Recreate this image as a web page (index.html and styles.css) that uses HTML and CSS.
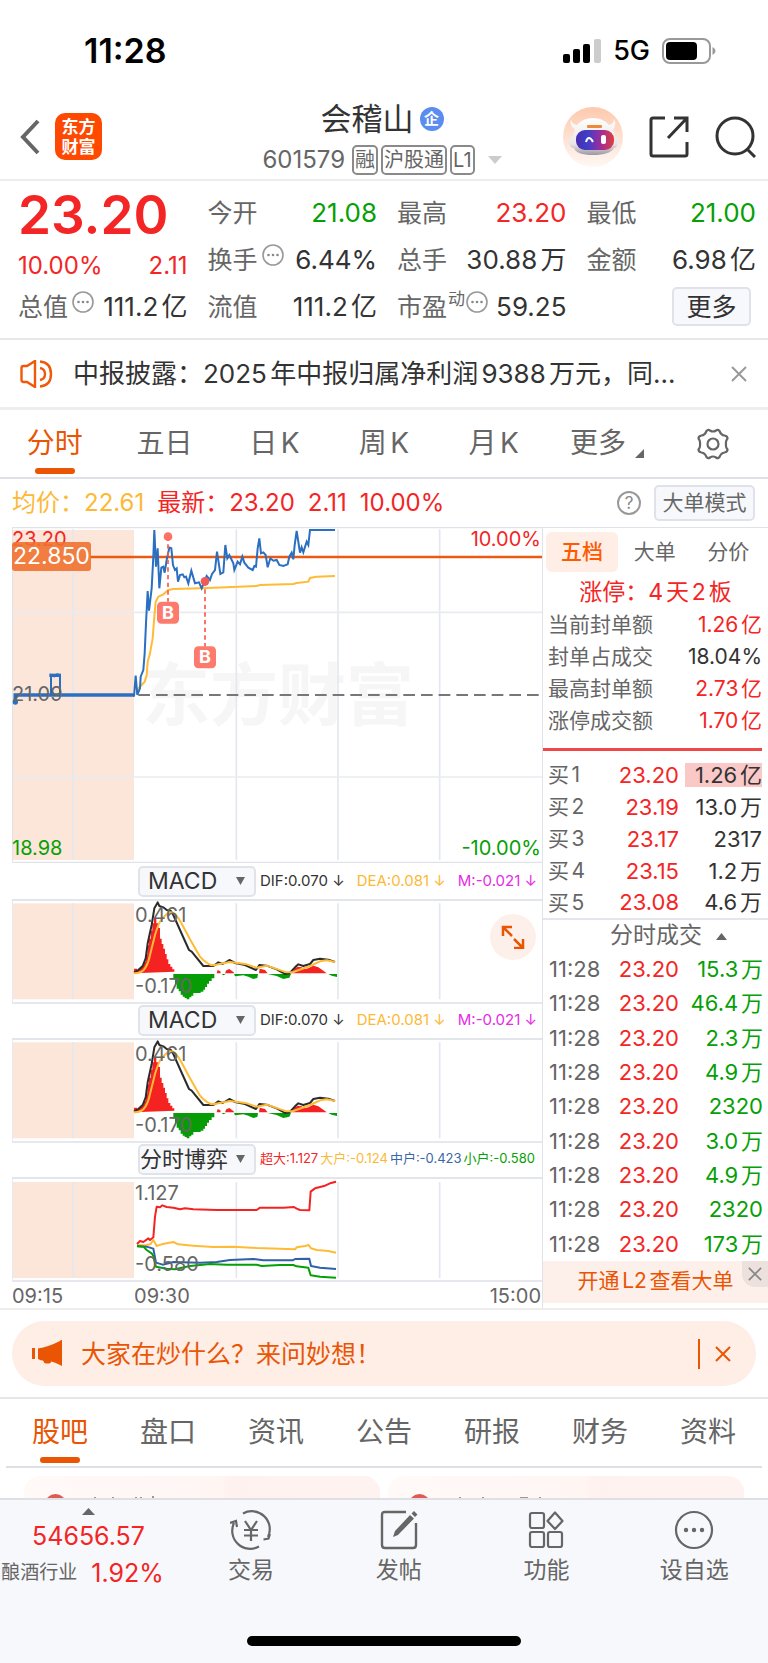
FILE: index.html
```html
<!DOCTYPE html>
<html lang="zh-CN">
<head>
<meta charset="utf-8">
<meta name="viewport" content="width=device-width, initial-scale=1">
<title>会稽山 601579</title>
<link rel="stylesheet" href="styles.css">
</head>
<body>
<svg class="defs" aria-hidden="true">
  <symbol id="dots" viewBox="0 0 22 22"><circle cx="11" cy="11" r="10" fill="none" stroke="#999" stroke-width="1.6"/><g fill="#888"><circle cx="6.5" cy="11" r="1.3"/><circle cx="11" cy="11" r="1.3"/><circle cx="15.500" cy="11" r="1.3"/></g></symbol>
  <symbol id="cross" viewBox="0 0 16 16"><path d="M1 1l14 14M15 1L1 15" fill="none" stroke="currentColor" stroke-width="2"/></symbol>
  <symbol id="macd" viewBox="36 123 1590 303">
    <rect x="38" y="130" width="364" height="288" fill="#fce6da"/>
    <path d="M219 130v288M709 130v288M1014 130v288M1319 130v288" stroke="#e4e7ed" stroke-width="5"/>
    <path d="M37 123v303" stroke="#e4e7ed" stroke-width="3"/>
    <g fill="#f52222"><path d="M402 340v-14h9v3h8v-6h6v-5h6v-12h6v-22h5v-28h5v-20h5v-24h5v-22h5v-16h7v16h6v14h5v32h5v16h5v14h5v16h5v16h5v14h6v8h6v8h6v7zM650 340l3-10 8 4 1 6zM675 340l4-9 9-4 12 9 3 4zM777 340l2-14 16 4 8 10zM873 340l12-15 8-5 12 2 10 6 10-3 15-8 15 5 15 10 10 8z"/></g>
    <g fill="#069c06"><path d="M520 342v16h5v14h5v14h6v8h6v10h6v6h6v4h6v4h8v-6h6v-5h6v-8h22v-4h8v-6h5v-8h6v-10h6v-8h8v-8h8v-13zM664 342l7 4 6-4zM702 342l3 7 25-3 15 4 15 7 12-3 2-12zM803 342l27 6 20 9 18-4 5-11zM985 342l10 5 16 4v-9z"/></g>
    <g fill="none" stroke-width="6" stroke-linejoin="round">
      <path stroke="#2b2b2b" d="M402 338l13-8 13-12 9-23 6-45 12-55 8-50 7-12 3-6 5 11 12 4 10 8 12 2 8 13 20 45 27 60 8 5 35 43h30l15-11 13 5 20-12 17 9 30 6 33 15 10-15 22 2 30 11 25 14 13-2 17-18 10-9 15 5 20-6 10-12 20-4 25 3 20 7"/>
      <path stroke="#ffbb36" d="M402 340q25 0 33-15 10-15 15-40l15-60q8-26 15-40 7-10 15-18 9-9 17-10 7 0 13 5 10 10 25 38l20 38 30 52q10 12 20 18 10 8 20 8l50-10 50 7 30 10 30-6 60 20 20-1 50-18 30-14 20-3 25 5"/>
    </g>
  </symbol>
</svg>
<div class="page">
  <div class="status">
    <span class="clock">11:28</span>
    <span class="signals">
      <svg width="38" height="24" viewBox="0 0 38 24" aria-hidden="true"><rect y="15" width="7" height="9" rx="2"/><rect x="10" y="10" width="7" height="14" rx="2"/><rect x="20" y="5" width="7" height="19" rx="2"/><rect x="31" width="7" height="24" rx="2" fill="#ccc"/></svg>
      <span class="net">5G</span>
      <svg width="54" height="26" viewBox="0 0 54 26" aria-hidden="true"><rect x="1" y="1" width="47" height="24" rx="7" fill="#fff" stroke="#999" stroke-width="2"/><rect x="4" y="4" width="31" height="18" rx="4"/><path d="M50.500 9q3 1.500 3 4t-3 4z" fill="#999"/></svg>
    </span>
  </div>

  <header class="top">
    <div class="top-left">
      <button class="plain" aria-label="返回"><svg width="20" height="36" viewBox="0 0 20 36"><path d="M18 2L3 18l15 16" fill="none" stroke="#666" stroke-width="4"/></svg></button>
      <a class="logo" href="#">东方<br>财富</a>
    </div>
    <div class="top-mid">
      <h1>会稽山<span class="corp">企</span></h1>
      <div class="code"><span class="num">601579</span><span class="tag">融</span><span class="tag">沪股通</span><span class="tag">L1</span><svg class="drop" width="14" height="8" viewBox="0 0 14 8"><path d="M0 0h14L7 8z" fill="#ccc"/></svg></div>
    </div>
    <div class="top-right">
      <button class="plain" aria-label="妙想"><svg width="60" height="60" viewBox="0 0 60 60">
        <defs><linearGradient id="halo" x1="0" y1="0" x2="0" y2="1"><stop offset="0" stop-color="#fdc9ad"/><stop offset="1" stop-color="#fff8f4"/></linearGradient>
        <linearGradient id="visor" x1="0" y1="0" x2="1" y2="0"><stop offset="0" stop-color="#4a2bb0"/><stop offset=".3" stop-color="#3d3fc8"/><stop offset=".65" stop-color="#a02c9a"/><stop offset="1" stop-color="#e0403c"/></linearGradient>
        <linearGradient id="shell" x1="0" y1="0" x2="0" y2="1"><stop offset="0" stop-color="#fff"/><stop offset=".7" stop-color="#e9e5e8"/><stop offset="1" stop-color="#9d98a0"/></linearGradient></defs>
        <circle cx="30" cy="30" r="30" fill="url(#halo)"/>
        <path d="M8 12q0 5 6 6 6-7 16-7t16 7q5-1 5-6 3 5-1 11 2 3 2 6 4 2 3 7t-4 5q-4 7-21 7T11 41q-4 0-5-5t4-7q0-3 2-6-6-5-4-11z" fill="url(#shell)"/>
        <rect x="13" y="23" width="38" height="20" rx="9" fill="url(#visor)"/>
        <path d="M23 35q1-4 3-4t4 4" fill="none" stroke="#fff" stroke-width="2"/><rect x="38" y="28" width="5" height="9" rx="2" fill="#fff"/>
        <rect x="24" y="18" width="15" height="3" rx="1" fill="#ee8a3c"/></svg></button>
      <button class="plain" aria-label="分享"><svg width="40" height="42" viewBox="0 0 40 42"><path d="M16 2H4Q2 2 2 4v34q0 2 2 2h32q2 0 2-2V26M25 2h13v14M38 2L19 22" fill="none" stroke="#333" stroke-width="3"/></svg></button>
      <button class="plain" aria-label="搜索"><svg width="42" height="42" viewBox="0 0 42 42"><circle cx="20" cy="20" r="18" fill="none" stroke="#333" stroke-width="3"/><path d="M32 33l8 8" stroke="#333" stroke-width="3"/></svg></button>
    </div>
  </header>

  <section class="quote">
    <div class="qcol">
      <div class="price">23.20</div>
      <div class="change"><span>10.00%</span><span>2.11</span></div>
      <div class="qrow"><span class="lab">总值<svg class="dots"><use href="#dots"/></svg></span><span>111.2亿</span></div>
    </div>
    <div class="qcol">
      <div class="qrow"><span class="lab">今开</span><span class="down">21.08</span></div>
      <div class="qrow"><span class="lab">换手<svg class="dots"><use href="#dots"/></svg></span><span>6.44%</span></div>
      <div class="qrow"><span class="lab">流值</span><span>111.2亿</span></div>
    </div>
    <div class="qcol">
      <div class="qrow"><span class="lab">最高</span><span class="up">23.20</span></div>
      <div class="qrow"><span class="lab">总手</span><span>30.88万</span></div>
      <div class="qrow"><span class="lab tight">市盈<sup>动</sup><svg class="dots"><use href="#dots"/></svg></span><span>59.25</span></div>
    </div>
    <div class="qcol">
      <div class="qrow"><span class="lab">最低</span><span class="down">21.00</span></div>
      <div class="qrow"><span class="lab">金额</span><span>6.98亿</span></div>
      <div class="qrow end"><button class="more">更多</button></div>
    </div>
  </section>

  <section class="news">
    <svg width="33" height="28" viewBox="0 0 33 28" aria-hidden="true"><path d="M1.500 8q0-2 2-2H7l8-5v26l-8-5H3.500q-2 0-2-2zM20 1.500q11 1 11 12.500T20 26.500M20 8q5 1 5 6t-5 6" fill="none" stroke="#ee5a0a" stroke-width="2.400"/></svg>
    <a href="#">中报披露：2025年中报归属净利润9388万元，同…</a>
    <button class="plain gray" aria-label="关闭"><svg width="16" height="16"><use href="#cross"/></svg></button>
  </section>

  <nav class="tabs">
    <button class="on">分时</button><button>五日</button><button>日K</button><button>周K</button><button>月K</button>
    <button>更多<svg class="corner" width="9" height="9" viewBox="0 0 9 9"><path d="M9 0v9H0z" fill="#666"/></svg></button>
    <button aria-label="设置"><svg width="34" height="32" viewBox="0 0 34 32"><path d="M10.500 3Q12 1 14 2.500q3 2 6 0Q22 1 23.500 3q1.500 4 5 4.500 3 .5 3 3-2 2.500-1.500 5.500-.5 3 1.500 5.500 0 2.500-3 3-3.500.5-5 4.500-1.500 2-3.500.5-3-2-6 0-2 1.500-3.500-.5-1.500-4-5-4.500-3-.5-3-3Q4.500 19 4 16q.5-3-1.500-5.500 0-2.500 3-3 3.500-.5 5-4.500z" fill="none" stroke="#666" stroke-width="2.200"/><circle cx="17" cy="16" r="5.500" fill="none" stroke="#666" stroke-width="2.200"/></svg></button>
  </nav>

  <div class="info">
    <span class="avg">均价：22.61</span><span class="up">最新：23.20</span><span class="up">2.11</span><span class="up">10.00%</span>
    <button class="help" aria-label="帮助">?</button>
    <button class="mode">大单模式</button>
  </div>

  <div class="board">
    <div class="left">
      <figure class="plot">
        <svg viewBox="36 21 1590 1008" role="img" aria-label="分时走势">
          <rect x="38" y="30" width="364" height="990" fill="#fce6da"/>
          <g fill="#f6f6f7" class="mark"><text x="426" y="600">东方财富</text></g>
          <path d="M219 28v992M709 28v992M1014 28v992M1319 28v992" stroke="#e4e7ed" stroke-width="5"/>
          <path d="M37 277h1589M37 771h1589" stroke="#e9ebf1" stroke-width="5"/>
          <path d="M37 23h1589M37 1027h1589M37 23v1004" stroke="#dfe2e9" stroke-width="4" fill="none"/>
          <path d="M415 525h1211" stroke="#777" stroke-width="6" stroke-dasharray="35 18"/>
          <path d="M270 111h1356" stroke="#ea5a10" stroke-width="7"/>
          <path d="M410 520l5-15 10-10 9-10 6-20 3-40 7-25 8-45 5-65 4-45 8-15 15-7 15-13 15-3 80-2 80-3 90-4 10-3 100-3 10-3 35-4 5-11 20-4 55-2" fill="none" stroke="#ffbb36" stroke-width="6"/>
          <path d="M46 550V525H402" fill="none" stroke="#2a6fc0" stroke-width="11"/><circle cx="46" cy="546" r="8" fill="#2a6fc0"/>
          <path d="M153 525v-60l10 4 8-6 9 2v60" fill="none" stroke="#2a6fc0" stroke-width="6"/><path d="M148 466h35" stroke="#2a6fc0" stroke-width="10"/>
          <path d="M402 530L407 467 412 525 420 505 422 470 430 450 434 400 438 310 443 213 447 272 455 205 460 110 463 30 468 140 473 85 478 205 484 143 490 140 494 158 500 120 508 83 514 85 519 135 525 150 530 145 534 185 540 165 548 163 553 172 558 170 565 190 574 152 585 190 597 187 605 205 613 185 620 168 630 180 636 162 645 150 651 95 661 162 670 157 676 75 682 115 688 105 700 130 703 150 713 125 720 133 727 110 733 128 745 143 758 150 763 138 768 140 773 85 778 55 783 100 790 97 797 105 803 142 811 115 820 122 830 120 838 135 850 138 863 133 868 110 875 98 880 118 884 75 890 33 900 98 905 82 910 97 920 65 925 75 930 30 1005 30" fill="none" stroke="#2a6fc0" stroke-width="6"/>
          <path d="M504 50v195M615 185v195" stroke="#fa5a4a" stroke-width="5" stroke-dasharray="13 10"/>
          <circle cx="504" cy="50" r="13" fill="#fd7266"/><circle cx="615" cy="184" r="13" fill="#f05a58"/>
          <g fill="#fd7b6c"><rect x="471" y="245" width="66" height="66" rx="13"/><rect x="582" y="379" width="66" height="66" rx="13"/></g>
        </svg>
        <span class="buy b1">B</span><span class="buy b2">B</span>
        <span class="tl up">23.20</span><span class="tag-price">22.850</span><span class="ml">21.09</span><span class="bl down">18.98</span><span class="tr up">10.00%</span><span class="br down">-10.00%</span>
      </figure>

      <div class="ind-head"><select aria-label="指标一"><option>MACD</option></select><span class="dif">DIF:0.070 ↓</span><span class="avg">DEA:0.081 ↓</span><span class="mag">M:-0.021 ↓</span></div>
      <figure class="ind"><svg viewBox="0 0 530 101"><use href="#macd"/></svg><span class="hi">0.461</span><span class="lo">-0.170</span>
        <button class="expand" aria-label="全屏"><svg width="24" height="24" viewBox="0 0 24 24"><path d="M11 2H2v9M2 2l9 9M22 14v9h-9M22 23l-9-9" fill="none" stroke="#ea5504" stroke-width="2.500"/></svg></button></figure>

      <div class="ind-head"><select aria-label="指标二"><option>MACD</option></select><span class="dif">DIF:0.070 ↓</span><span class="avg">DEA:0.081 ↓</span><span class="mag">M:-0.021 ↓</span></div>
      <figure class="ind"><svg viewBox="0 0 530 101"><use href="#macd"/></svg><span class="hi">0.461</span><span class="lo">-0.170</span></figure>

      <div class="ind-head game"><select aria-label="指标三"><option>分时博弈</option></select><span class="up">超大:1.127</span><span class="avg">大户:-0.124</span><span class="navy">中户:-0.423</span><span class="down">小户:-0.580</span></div>
      <figure class="ind"><svg viewBox="36 117 1590 303">
        <rect x="38" y="126" width="364" height="288" fill="#fce6da"/>
        <path d="M219 126v288M709 126v288M1014 126v288M1319 126v288" stroke="#e4e7ed" stroke-width="5"/><path d="M37 117v303" stroke="#e4e7ed" stroke-width="3"/>
        <g fill="none" stroke-width="6" stroke-linejoin="round">
          <path stroke="#ffbb36" d="M411 316L440 315 452 312 460 300 470 318 485 313 500 310 520 306 535 313 580 317 640 321 700 320 770 324 885 328 890 322 915 318 926 315 933 325 950 330 985 333 1008 338"/>
          <path stroke="#3060a8" d="M411 319L440 320 460 326 468 368 488 374 520 366 600 368 650 366 690 360 760 357 790 361 878 361 885 357 928 356 933 378 960 383 1008 387"/>
          <path stroke="#06a006" d="M411 318L430 320 440 330 455 340 460 348 468 380 500 386 525 388 570 378 630 372 680 374 770 374 785 378 840 375 880 375 890 379 925 383 932 406 960 410 1008 413"/>
          <path stroke="#f52222" d="M411 312L420 303 430 306 445 295 450 300 460 292 465 230 470 200 480 202 487 196 500 201 520 203 540 208 555 205 580 208 650 210 770 210 780 203 850 203 882 201 890 206 900 210 928 211 932 155 945 145 975 137 990 130 1008 125"/>
        </g></svg><span class="hi">1.127</span><span class="lo">-0.580</span></figure>
      <div class="axis"><span>09:15</span><span class="open">09:30</span><span class="close">15:00</span></div>
    </div>

    <aside class="right">
      <div class="rtabs"><button class="on">五档</button><button>大单</button><button>分价</button></div>
      <div class="limit">涨停：4天2板</div>
      <dl class="stats">
        <div><dt>当前封单额</dt><dd class="up">1.26亿</dd></div>
        <div><dt>封单占成交</dt><dd>18.04%</dd></div>
        <div><dt>最高封单额</dt><dd class="up">2.73亿</dd></div>
        <div><dt>涨停成交额</dt><dd class="up">1.70亿</dd></div>
      </dl>
      <table class="bids">
        <tr><th scope="row">买1</th><td class="up">23.20</td><td><span class="hot">1.26亿</span></td></tr>
        <tr><th scope="row">买2</th><td class="up">23.19</td><td>13.0万</td></tr>
        <tr><th scope="row">买3</th><td class="up">23.17</td><td>2317</td></tr>
        <tr><th scope="row">买4</th><td class="up">23.15</td><td>1.2万</td></tr>
        <tr><th scope="row">买5</th><td class="up">23.08</td><td>4.6万</td></tr>
      </table>
      <button class="deals">分时成交<svg width="11" height="7" viewBox="0 0 11 7"><path d="M0 7h11L5.500 0z" fill="#666"/></svg></button>
      <ul class="ticks">
        <li><span>11:28</span><span class="up">23.20</span><span class="down">15.3万</span></li>
        <li><span>11:28</span><span class="up">23.20</span><span class="down">46.4万</span></li>
        <li><span>11:28</span><span class="up">23.20</span><span class="down">2.3万</span></li>
        <li><span>11:28</span><span class="up">23.20</span><span class="down">4.9万</span></li>
        <li><span>11:28</span><span class="up">23.20</span><span class="down">2320</span></li>
        <li><span>11:28</span><span class="up">23.20</span><span class="down">3.0万</span></li>
        <li><span>11:28</span><span class="up">23.20</span><span class="down">4.9万</span></li>
        <li><span>11:28</span><span class="up">23.20</span><span class="down">2320</span></li>
        <li><span>11:28</span><span class="up">23.20</span><span class="down">173万</span></li>
      </ul>
      <div class="l2"><a href="#">开通L2查看大单</a><button aria-label="关闭"><svg width="14" height="14"><use href="#cross"/></svg></button></div>
    </aside>
  </div>

  <section class="ask">
    <div class="pill">
      <svg width="32" height="27" viewBox="0 0 32 27" aria-hidden="true"><path d="M0 8h3v11H0zM6 8.500Q16 7 28 1q0-1 2-1v26l-2-1q-5-3-9-3.500 0 2-3 2h-2q-2 0-3-3-2 0-5-1.500z" fill="#ea5504"/></svg>
      <a href="#">大家在炒什么？来问妙想！</a>
      <span class="bar"></span>
      <button class="plain orange" aria-label="关闭"><svg width="16" height="16"><use href="#cross"/></svg></button>
    </div>
  </section>

  <nav class="tabs lower">
    <button class="on">股吧</button><button>盘口</button><button>资讯</button><button>公告</button><button>研报</button><button>财务</button><button>资料</button>
  </nav>
  <div class="cards">
    <div class="card"><i></i><svg width="80" height="3" viewBox="0 0 80 3"><path d="M9 1v2M27 1v2M50 1v2M55 1v2M67 0v3" stroke="#999" stroke-width="2"/></svg></div>
    <div class="card"><i></i><svg width="100" height="3" viewBox="0 0 100 3"><path d="M10 1v2M33 1v2M70 2h8M90 1v2" stroke="#999" stroke-width="2"/></svg></div>
  </div>

  <footer class="dock">
    <div class="items">
      <button class="index"><svg width="13" height="7" viewBox="0 0 13 7"><path d="M0 7h13L6.500 0z" fill="#666"/></svg><span class="up big">54656.57</span><span class="sector"><small>酿酒行业</small><span class="up">1.92%</span></span></button>
      <button><svg width="42" height="40" viewBox="0 0 42 40"><g fill="none" stroke="#666" stroke-width="2.200"><path d="M13 3.500A18 18 0 0 1 38 27M40 24l-1.500 4.500-5 1M29 36.500A18 18 0 0 1 4 13M0 13l6-2 1 6"/><path d="M15 11l6 9 6-9M14 20h14M14 25.500h14M21 20v11"/></g></svg>交易</button>
      <button><svg width="38" height="40" viewBox="0 0 38 40"><path d="M26 2H5Q2 2 2 5v30q0 3 3 3h28q3 0 3-3V13" fill="none" stroke="#666" stroke-width="2.400"/><path d="M13 27l2-6L30 5l4 3.500L18 25zM31.500 3.500L34 1l3.500 3.500L35 7z" fill="#666"/></svg>发帖</button>
      <button><svg width="36" height="40" viewBox="0 0 36 40"><g fill="none" stroke="#666" stroke-width="2.200"><rect x="2" y="3" width="14" height="15" rx="2"/><rect x="2" y="22" width="14" height="15" rx="2"/><rect x="20" y="22" width="14" height="15" rx="2"/><path d="M27 2.500l7.500 8.500-7.500 8-7.500-8z" stroke-linejoin="round"/></g></svg>功能</button>
      <button><svg width="40" height="40" viewBox="0 0 40 40"><circle cx="20" cy="20" r="18" fill="none" stroke="#666" stroke-width="2.200"/><g fill="#666"><circle cx="12" cy="20" r="2.200"/><circle cx="20" cy="20" r="2.200"/><circle cx="28" cy="20" r="2.200"/></g></svg>设自选</button>
    </div>
    <div class="home"></div>
  </footer>
</div>
</body>
</html>
```
FILE: styles.css
```css
* { box-sizing: border-box; }
body {
  margin: 0;
  background: #fff;
  color: #333;
  font-family: Inter, "Noto Sans CJK SC", sans-serif;
  font-size: 24px;
  line-height: 1.2;
  text-autospace: normal;
}
button, select { font: inherit; color: inherit; margin: 0; padding: 0; border: 0; background: none; }
a { color: inherit; text-decoration: none; }
svg { display: block; flex: none; }
figure, dl, dd, ul, h1 { margin: 0; padding: 0; font-weight: 400; }
.defs { position: absolute; width: 0; height: 0; }
.up { color: #f42525; }
.down { color: #069f06; }
.avg { color: #fdb935; }
.mag { color: #e52be5; }
.navy { color: #3a66a8; }
.plain { display: flex; }
.gray { color: #999; }
.orange { color: #ea5504; }

/* status bar */
.status { display: flex; justify-content: space-between; align-items: center; height: 95px; padding: 8px 52px 0 84px; color: #000; }
.clock { font-size: 34px; font-weight: 600; }
.signals { display: flex; align-items: center; gap: 12px; }
.net { font-size: 27px; font-weight: 500; }

/* title bar */
.top { display: grid; grid-template-columns: 1fr auto 1fr; align-items: center; height: 86px; padding-bottom: 1px; border-bottom: 2px solid #ededed; }
.top-left { display: flex; align-items: center; gap: 15px; padding-left: 20px; }
.logo { display: flex; align-items: center; justify-content: center; width: 47px; height: 47px; border-radius: 10px; background: #ff4800; color: #fff; font-size: 17px; font-weight: 700; line-height: 20px; }
.top-mid { display: flex; flex-direction: column; align-items: center; gap: 5px; padding-right: 4px; }
.top-mid h1 { display: flex; align-items: center; gap: 6px; font-size: 31px; line-height: 42px; }
.corp { width: 24px; height: 24px; border-radius: 50%; background: #5b8def; color: #fff; font-size: 15px; font-weight: 700; line-height: 24px; text-align: center; }
.code { display: flex; align-items: center; gap: 3px; height: 30px; color: #666; }
.code .num { margin-right: 4px; }
.tag { height: 30px; padding: 0 1px; border: 2px solid #8a8a8a; border-radius: 5px; font-size: 20px; line-height: 26px; }
.drop { margin-left: 10px; }
.top-right { display: flex; align-items: center; justify-content: flex-end; gap: 26px; padding-right: 11px; }

/* quote grid */
.quote { display: grid; grid-template-columns: repeat(4, minmax(0, 1fr)); gap: 20px; padding: 8px 12px 8px 18px; border-bottom: 2px solid #e8e8e8; }
.price { height: 52px; color: #f42525; font-size: 53px; font-weight: 600; line-height: 52px; }
.change { display: flex; justify-content: space-between; height: 42px; padding-top: 8px; color: #f42525; line-height: 34px; }
.qrow { display: flex; justify-content: space-between; align-items: center; height: 47px; font-size: 26px; white-space: nowrap; }
.qrow.end { justify-content: flex-end; padding-right: 5px; }
.lab { display: flex; align-items: center; gap: 4px; color: #666; font-size: 25px; }
.lab.tight { gap: 1px; }
.lab sup { align-self: flex-start; font-size: 17px; line-height: 17px; }
.dots { width: 22px; height: 22px; margin-bottom: 10px; }
.more { width: 79px; height: 39px; border: 2px solid #dfe2ea; border-radius: 5px; background: #f7f8fb; font-size: 25px; }

/* announcement */
.news { display: flex; align-items: center; height: 70px; padding: 0 21px 0 20px; border-bottom: 3px solid #eee; }
.news a { flex: 1; min-width: 0; margin-left: 20px; font-size: 26px; white-space: nowrap; overflow: hidden; }

/* tab strips */
.tabs { display: flex; height: 69px; border-bottom: 2px solid #dfe0e5; font-size: 28px; color: #666; }
.tabs button { position: relative; flex: 1; display: flex; align-items: center; justify-content: center; }
.tabs .on { color: #ea5504; }
.tabs .on::after { content: ""; position: absolute; bottom: 3px; left: 50%; width: 40px; height: 6px; margin-left: -20px; border-radius: 3px; background: #ea5504; }
.corner { align-self: flex-end; margin: 0 -7px 19px 9px; }

/* price summary */
.info { display: flex; align-items: center; gap: 13px; height: 48px; padding: 0 13px 0 12px; white-space: nowrap; }
.help { width: 24px; height: 24px; margin-left: auto; border: 2px solid #999; border-radius: 50%; color: #888; font-size: 17px; line-height: 20px; }
.mode { width: 101px; height: 36px; border: 2px solid #dfe2ea; border-radius: 5px; background: #f7f8fb; color: #666; font-size: 21px; }

/* charts and order book */
.board { display: grid; grid-template-columns: minmax(0, 1fr) 226px; border-bottom: 2px solid #ededed; }
.left { padding-left: 12px; }
.left svg { width: 100%; }
.plot, .ind { position: relative; }
.plot span, .ind span { position: absolute; font-size: 20px; line-height: 24px; color: #666; }
.plot .up { color: #f42525; }
.plot .down { color: #069f06; }
.mark { font-size: 204px; font-weight: 700; }
.plot .tl { top: 0; left: 0; }
.plot .tr { top: 0; right: 1px; }
.plot .ml { top: 155px; left: 0; }
.plot .bl { bottom: 3px; left: 0; }
.plot .br { bottom: 3px; right: 1px; }
.plot .tag-price { top: 15px; left: 0; padding: 0 1px; border-radius: 3px; background: rgb(239 113 47 / .9); color: #fff; font-size: 23px; line-height: 29px; }
.plot .buy { width: 22px; color: #fff; font-size: 18px; font-weight: 700; line-height: 22px; text-align: center; }
.plot .b1 { top: 75px; left: 145px; }
.plot .b2 { top: 119px; left: 182px; }
.ind-head { display: flex; align-items: center; gap: 12px; height: 38px; padding-left: 126px; border-bottom: 2px solid #e2e5ea; font-size: 15px; white-space: nowrap; }
.ind-head select { flex: none; width: 118px; height: 31px; margin-right: -8px; padding-left: 8px; border: 2px solid #e0e3ea; border-radius: 5px; appearance: none; background: #f7f8fb url("data:image/svg+xml,%3Csvg xmlns='http://www.w3.org/2000/svg' width='9' height='8'%3E%3Cpath d='M0 0h9L4.500 8z' fill='%23666'/%3E%3C/svg%3E") no-repeat right 9px center; color: #333; font-size: 23px; }
.ind-head.game { gap: 2px; font-size: 13px; text-autospace: no-autospace; }
.ind-head.game select { margin-right: 2px; padding-left: 0; font-size: 22px; }
.ind { border-bottom: 2px solid #e6e8ed; margin-bottom: -2px; }
.ind .hi { top: 2px; left: 123px; }
.ind .lo { bottom: 4px; left: 123px; }
.expand { position: absolute; top: 13px; right: 6px; display: flex; align-items: center; justify-content: center; width: 46px; height: 46px; border-radius: 50%; background: #fdf0ea; }
.left .expand svg { width: 24px; }
.axis { display: flex; height: 28px; color: #666; font-size: 20px; line-height: 32px; }
.axis .open { margin-left: 71px; }
.axis .close { margin-left: auto; margin-right: 1px; }

.right { display: flex; flex-direction: column; border-left: 1px solid #dfe2e9; border-top: 1px solid #dfe2e9; font-size: 21px; }
.rtabs { display: grid; grid-template-columns: 72px 1fr 1fr; height: 48px; padding: 4px 3px; color: #666; }
.rtabs .on { border-radius: 6px; background: #ffeee6; color: #ff5a00; font-weight: 500; }
.limit { height: 33px; color: #f42525; font-size: 23px; line-height: 33px; text-align: center; }
.stats { margin-right: 6px; padding: 0 0 11px 5px; border-bottom: 3px solid #ee4848; }
.stats div { display: flex; justify-content: space-between; line-height: 32px; color: #333; }
.stats dt { color: #666; }
.stats .up, .bids .up { color: #f42525; }
.bids { width: 100%; margin-top: 8px; padding: 0; border-collapse: collapse; border-bottom: 2px solid #e4e6ec; }
.bids tr { height: 32px; }
.bids th { padding: 0 0 0 5px; color: #666; font-weight: 400; text-align: left; }
.bids td { padding: 0; font-size: 22px; text-align: right; }
.bids td:last-child { width: 89px; padding-right: 6px; }
.hot { display: inline-block; width: 77px; background: #fbc8c8; line-height: 24px; }
.deals { display: flex; align-items: center; justify-content: center; gap: 14px; height: 32px; padding-left: 26px; color: #666; font-size: 23px; }
.ticks { display: flex; flex: 1; flex-direction: column; list-style: none; color: #666; font-size: 22px; }
.ticks li { display: grid; grid-template-columns: 54px 1fr 84px; flex: 1; align-items: center; padding: 0 5px 0 6px; line-height: 24px; }
.ticks span + span { text-align: right; }
.l2 { position: relative; height: 42px; margin-bottom: 5px; background: #fdf0ea; color: #ea5504; line-height: 39px; text-align: center; }
.l2 button { position: absolute; top: 0; right: 0; display: flex; align-items: center; justify-content: center; width: 26px; height: 26px; border-bottom-left-radius: 13px; background: #ece1dc; color: #888; }

/* assistant strip */
.ask { padding: 11px 12px; border-bottom: 2px solid #e6e6e6; }
.pill { display: flex; align-items: center; height: 65px; padding: 0 25px 0 20px; border-radius: 33px; background: #feeee6; color: #ea5504; font-size: 25px; }
.pill a { flex: 1; margin-left: 17px; }
.bar { width: 2px; height: 30px; margin-right: 15px; background: #ea5504; }
.lower { margin: 0 6px; }
.cards { display: flex; gap: 8px; height: 30px; padding: 8px 24px 0; overflow: hidden; }
.card { flex: 1; display: flex; align-items: flex-start; gap: 20px; height: 60px; padding: 18px 21px; border-radius: 16px; background: linear-gradient(90deg, #fff9f7, #fff6f4 55%, #fff1ef 58%, #fff3f1); }
.card i { width: 21px; height: 21px; border-radius: 50%; background: #e05a55; }
.card svg { margin-top: 2px; }

/* bottom dock */
.dock { display: flex; flex-direction: column; align-items: center; height: 165px; border-top: 2px solid #dfe0e5; background: #f7f8fb; }
.items { display: grid; grid-template-columns: 177px repeat(4, minmax(0, 1fr)); width: 100%; }
.items button { display: flex; flex-direction: column; align-items: center; gap: 7px; padding-top: 10px; color: #666; font-size: 23px; }
.items .index { gap: 6px; padding-top: 8px; font-size: 25px; }
.items .index .up { line-height: 31px; }
.sector { display: flex; align-items: center; gap: 14px; padding-right: 12px; white-space: nowrap; }
.sector small { font-size: 19px; }
.home { width: 274px; height: 10px; margin-top: auto; margin-bottom: 17px; border-radius: 5px; background: #000; }
```
